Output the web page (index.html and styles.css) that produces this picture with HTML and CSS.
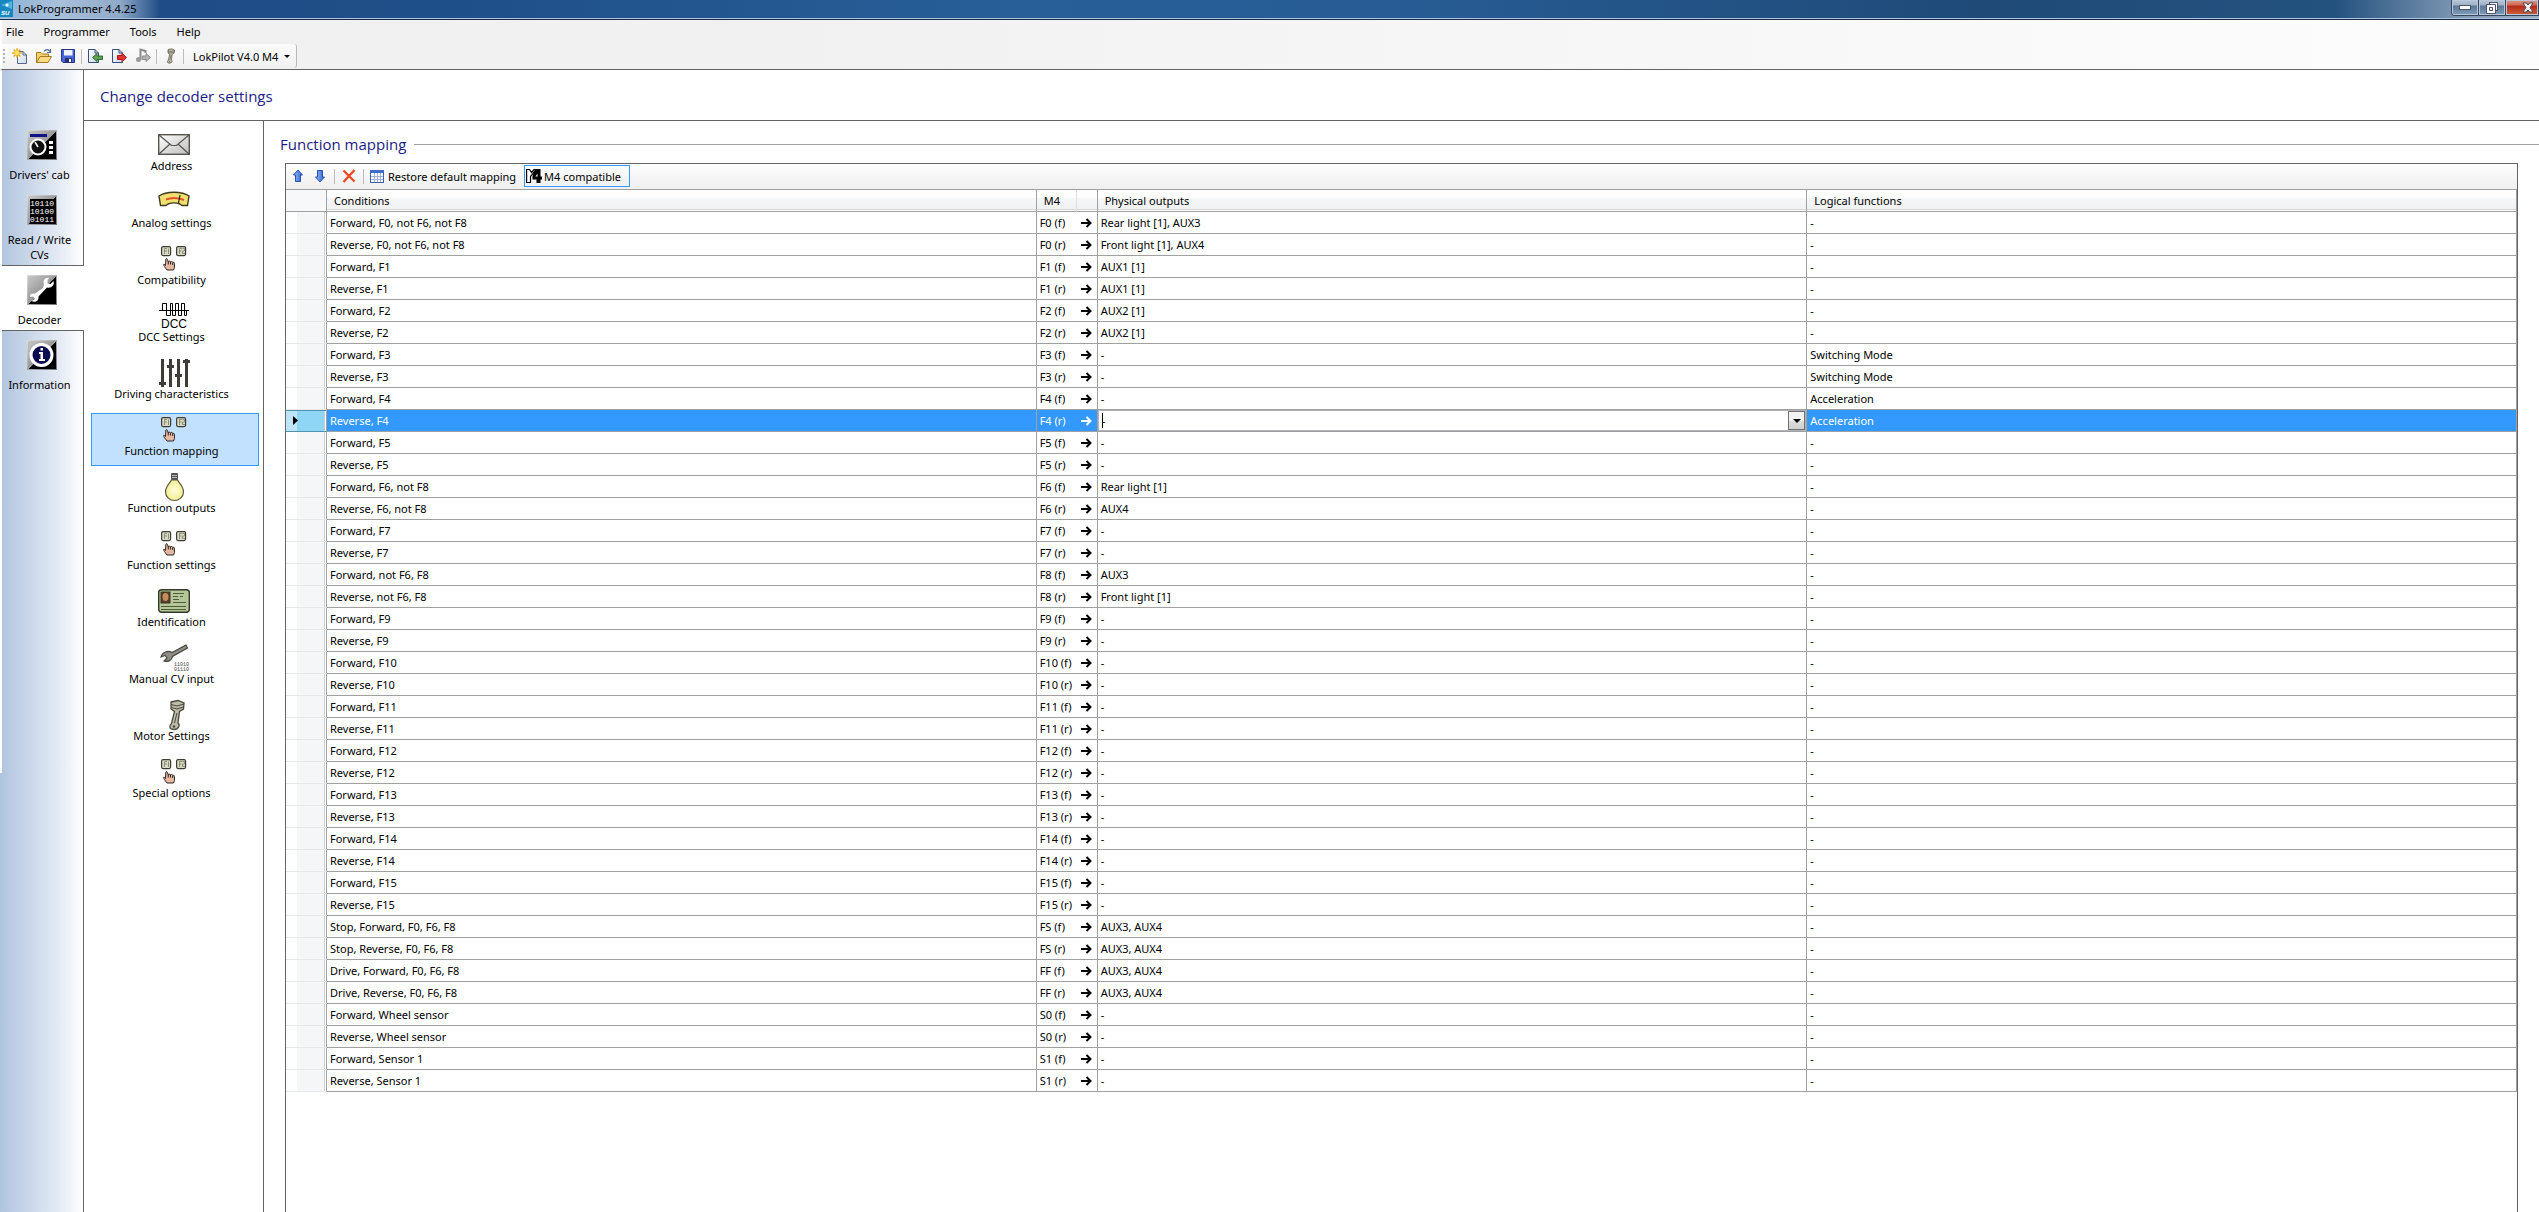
FILE: index.html
```html
<!DOCTYPE html>
<html lang="en">
<head>
<meta charset="utf-8">
<title>LokProgrammer 4.4.25</title>
<link rel="stylesheet" href="styles.css">
</head>
<body>
<svg class="defs" aria-hidden="true">
  <defs>
    <linearGradient id="plate" x1="0" y1="0" x2="1" y2="1">
      <stop offset="0" stop-color="#c8c8c8"/><stop offset=".5" stop-color="#9a9a9a"/><stop offset=".52" stop-color="#000"/><stop offset="1" stop-color="#000"/>
    </linearGradient>
    <linearGradient id="frame" x1="0" y1="0" x2="1" y2="1">
      <stop offset="0" stop-color="#ddd"/><stop offset="1" stop-color="#777"/>
    </linearGradient>
    <linearGradient id="paper" x1="0" y1="0" x2="1" y2="1">
      <stop offset="0" stop-color="#fff"/><stop offset="1" stop-color="#c9d6e8"/>
    </linearGradient>
    <linearGradient id="envelope" x1="0" y1="0" x2="1" y2="1">
      <stop offset="0" stop-color="#fff"/><stop offset="1" stop-color="#bdbdbd"/>
    </linearGradient>
    <linearGradient id="arrow-blue" x1="0" y1="0" x2="1" y2="0">
      <stop offset="0" stop-color="#9dbcf4"/><stop offset="1" stop-color="#2b5fd0"/>
    </linearGradient>
    <radialGradient id="glow"><stop offset="0" stop-color="#fffde0"/><stop offset="1" stop-color="#f3ee90"/></radialGradient>
    <symbol id="fkeys" viewBox="0 0 32 32">
      <g fill="#d9dac6" stroke="#3c3c34" stroke-width="1.200">
        <rect x="3.600" y="3.600" width="9" height="9" rx="1.500"/><rect x="18.600" y="3.600" width="9" height="9" rx="1.500"/>
      </g>
      <g fill="none" stroke="#8d8e78">
        <path d="M6.500 11V5.500H9M6.500 8H9M10.500 5.500V11M21.500 11V5.500H24M21.500 8H23.500M24.500 5.500H26.500V8H24.500V10.500H27"/>
      </g>
      <path d="M7.500 22.500C5.800 20.500 4.800 20.800 6.400 23.500L9 27H15.500L16.500 24.500V20.500C16.500 19 14.700 19 14.700 20.300V19.500C14.500 18 12.500 18 12.500 19.500V19C12.300 17.800 10.300 17.800 10.300 19.200L9.500 16.500C9 15 7.500 15.500 7.800 17Z" fill="#e6b8a2" stroke="#2d2926"/>
      <path d="M10.300 19V21.500M12.500 19V21.500M14.700 20V22" stroke="#2d2926"/>
    </symbol>
    <symbol id="piston" viewBox="0 0 32 32">
      <path d="M13 3L20 1.500L26 4L25.500 10L21.500 12.500L20 24C22.500 26 20.500 30.500 16 30.500C11.500 30.500 10.500 27 13.500 24.500L16.500 12.500L13 10Z" fill="#bdbaa6" stroke="#4a483c" stroke-width="1.300"/>
      <path d="M13 5.500L19 7L26 5M13.500 8.500L19 10L25.500 8M19 14L16.500 24" fill="none" stroke="#4a483c"/>
      <circle cx="16" cy="27.500" r="1.200" fill="#4a483c"/>
    </symbol>
  </defs>
</svg>

<header class="titlebar">
  <svg class="app-logo" viewBox="0 0 13 17"><rect width="13" height="17" fill="#1787c0"/><path d="M1 5L12 1V9Z" fill="#4fb4e0"/><circle cx="7" cy="5" r="1.500" fill="#fff"/><text x="1" y="15" class="logo-text">SU</text></svg>
  <span class="window-title">LokProgrammer 4.4.25</span>
  <div class="window-buttons">
    <button class="win-btn" aria-label="Minimize"><svg width="12" height="6" viewBox="0 0 12 6"><rect x=".5" y=".5" width="11" height="4" fill="#fff" stroke="#4b5468"/></svg></button>
    <button class="win-btn" aria-label="Restore"><svg width="12" height="12" viewBox="0 0 12 12"><g fill="#fff" stroke="#4b5468"><rect x="3.500" y=".5" width="8" height="8"/><path d="M.5 2.500H9.500V11.500H.5ZM3.500 5.500V8.500H6.500V5.500Z" fill-rule="evenodd"/></g></svg></button>
    <button class="win-btn close" aria-label="Close"><svg width="12" height="11" viewBox="0 0 12 11"><path d="M1 1H4.500L6 3L7.500 1H11L8 5.500L11 10H7.500L6 8L4.500 10H1L4 5.500Z" fill="#fff" stroke="#4b4a5c"/></svg></button>
  </div>
</header>

<nav class="menubar">
  <button>File</button><button>Programmer</button><button>Tools</button><button>Help</button>
</nav>

<div class="toolbar-row">
  <div class="toolbar">
    <i class="grip"></i>
    <button aria-label="New"><svg viewBox="0 0 16 16"><path d="M5.500 3.500H11L14.500 7V15.500H5.500Z" fill="url(#paper)" stroke="#53688c"/><path d="M11 3.500V7H14.500" fill="none" stroke="#53688c"/><path d="M5 .2V9.800M.2 5H9.800M1.600 1.600L8.400 8.400M8.400 1.600L1.600 8.400" stroke="#f0a810" stroke-width="1.400"/><circle cx="5" cy="5" r="2" fill="#fff06a"/></svg></button>
    <button aria-label="Open"><svg viewBox="0 0 16 16"><path d="M.5 14.500V4.500H5L6.500 6H12.500V8" fill="#f5d070" stroke="#a97b1c"/><path d="M.5 14.500L4 8.500H15.500L12 14.500Z" fill="#fbdc84" stroke="#a97b1c"/><path d="M8 3.500C10 .8 12.500 1 13.800 3.500M14.500 1V4.500H11" fill="none" stroke="#49699a" stroke-width="1.200"/></svg></button>
    <button aria-label="Save"><svg viewBox="0 0 16 16"><path d="M1.500 1.500H14.500V14.500H3L1.500 13Z" fill="#4664d8" stroke="#23348e"/><path d="M4 2H12.500V7.500H4Z" fill="#eef2fc"/><path d="M5 10H12V14H5Z" fill="#26326c"/><path d="M9 11H11V14H9Z" fill="#fff"/></svg></button>
    <i class="sep"></i>
    <button aria-label="Import"><svg viewBox="0 0 16 16"><path d="M1.500 1.500H8L11.500 5V14.500H1.500Z" fill="url(#paper)" stroke="#35507c"/><path d="M8 1.500V5H11.500" fill="none" stroke="#35507c"/><path d="M5.500 9.500L10 5.500V8H15.500V11.500H10V13.500Z" fill="#5da353" stroke="#2f6d2c"/></svg></button>
    <button aria-label="Export"><svg viewBox="0 0 16 16"><path d="M1.500 1.500H8L11.500 5V14.500H1.500Z" fill="url(#paper)" stroke="#35507c"/><path d="M8 1.500V5H11.500" fill="none" stroke="#35507c"/><path d="M15.500 9.500L11 5V7.500H6.500V11.500H11V14Z" fill="#e33434" stroke="#b01818"/></svg></button>
    <button aria-label="Sound"><svg viewBox="0 0 16 16"><path d="M5.500 12V1.500L10.500 3V5" fill="none" stroke="#8a8a8a" stroke-width="2"/><circle cx="3.500" cy="11.500" r="2.500" fill="#999"/><path d="M15.500 9.500L11 5.500V8H7.500V11.500H11V13.500Z" fill="#b4b4b4" stroke="#8a8a8a"/></svg></button>
    <i class="sep"></i>
    <button aria-label="Motor"><svg viewBox="4 0 26 32"><use href="#piston" width="32" height="32"/></svg></button>
    <i class="sep"></i>
    <button class="decoder-pick">LokPilot V4.0 M4<i class="caret"></i></button>
  </div>
</div>

<div class="workspace">
  <nav class="sidebar">
    <a href="#cab"><svg viewBox="0 0 30 30"><rect x=".5" y=".5" width="29" height="29" fill="url(#plate)" stroke="url(#frame)"/><rect x="3" y="4" width="17" height="3" fill="#11118a"/><circle cx="11" cy="17" r="7.500" fill="#111" stroke="#fff" stroke-width="2"/><path d="M11 17L8 12" stroke="#fff" stroke-width="1.500"/><path d="M22 11H26V14H22ZM22 16H26V19H22ZM22 21H26V24H22Z" fill="#fff"/></svg><span>Drivers' cab</span></a>
    <a href="#cvs"><svg viewBox="0 0 30 30"><rect x=".5" y=".5" width="29" height="29" fill="url(#plate)" stroke="url(#frame)"/><path d="M3 4H27V28H3Z" fill="#000"/><g class="bits"><text x="3" y="11">10110</text><text x="3" y="19">10100</text><text x="3" y="27">01011</text></g></svg><span>Read / Write CVs</span></a>
    <a href="#decoder" class="current"><svg viewBox="0 0 30 30"><rect x=".5" y=".5" width="29" height="29" fill="url(#plate)" stroke="url(#frame)"/><path d="M22 3C18 2 15.500 6 17 9.500L16 13L8 18.500C4 18 2.500 20 3 22L6.500 21.500L7.500 24L4.500 26C8 28 12 26 11.500 21.500L20 12.500C24 13.500 28 10.500 26.500 6L23.500 9L20.500 8.500L20.500 5.500Z" fill="#fff"/></svg><span>Decoder</span></a>
    <a href="#info"><svg viewBox="0 0 30 30"><rect x=".5" y=".5" width="29" height="29" fill="url(#plate)" stroke="url(#frame)"/><circle cx="14.500" cy="15" r="10.500" fill="#0c0c50" stroke="#fff" stroke-width="3"/><path d="M12 12H16V19H18V21H12V19H13.500V14H12ZM13.500 8H16V10.500H13.500Z" fill="#fff"/></svg><span>Information</span></a>
  </nav>

  <div class="content">
    <h1 class="page-title">Change decoder settings</h1>
    <div class="columns">
      <nav class="settings-nav">
        <a href="#address"><svg viewBox="0 0 32 32"><rect x=".7" y="5.700" width="30.600" height="19.600" fill="url(#envelope)" stroke="#55534d" stroke-width="1.400"/><path d="M1 6L13.500 16.500H18.500L31 6M1 25L12 15M31 25L20 15" fill="none" stroke="#55534d" stroke-width="1.200"/></svg><span>Address</span></a>
        <a href="#analog"><svg viewBox="0 0 32 32"><path d="M1 10C8 5 24 5 31 10L29.500 19.500H24L22 18C18 16.500 14 16.500 10 18L8 19.500H2.500Z" fill="#f0e070" stroke="#3f3a20" stroke-width="1.400"/><path d="M8 13.500C13 11.500 20 11.500 26 14" fill="none" stroke="#e8502c" stroke-width="2"/><path d="M22 9L20.500 17" stroke="#302a18" stroke-width="1.300"/></svg><span>Analog settings</span></a>
        <a href="#compat"><svg viewBox="0 0 32 32"><use href="#fkeys"/></svg><span>Compatibility</span></a>
        <a href="#dcc"><svg viewBox="0 0 32 32"><path d="M1 10.500H31M4.500 10V3.500H8.500V15.500H12.500V3.500H14.500V15.500H17.500V3.500H20.500V15.500H23.500V3.500H26.500V15.500H28.500V10" fill="none" stroke="#000"/><text x="3" y="28" class="dcc">DCC</text></svg><span>DCC Settings</span></a>
        <a href="#driving"><svg viewBox="0 0 32 32"><path d="M4.500 2V30M12.500 2V30M20.500 2V30M28.500 2V30" stroke="#3d3c37" stroke-width="3"/><path d="M1 26.500H8M9 9.500H16M17 18.500H24M25 4.500H32" stroke="#3d3c37" stroke-width="3"/></svg><span>Driving characteristics</span></a>
        <a href="#mapping" class="selected"><svg viewBox="0 0 32 32"><use href="#fkeys"/></svg><span>Function mapping</span></a>
        <a href="#outputs"><svg viewBox="0 0 32 32"><path d="M13.500 9C12 12 7.500 15 7.500 21C7.500 26 12 29.500 16.500 29.500C21 29.500 25.500 26 25.500 21C25.500 15 21 12 19.500 9Z" fill="url(#glow)" stroke="#5a5840" stroke-width="1.200"/><rect x="13" y="2" width="7" height="7" rx="1" fill="#555"/><path d="M14 4.500H19M14 6.500H19" stroke="#bbb"/></svg><span>Function outputs</span></a>
        <a href="#settings"><svg viewBox="0 0 32 32"><use href="#fkeys"/></svg><span>Function settings</span></a>
        <a href="#ident"><svg viewBox="0 0 32 32"><rect x=".7" y="4.700" width="30.600" height="22.600" rx="3" fill="#b5c796" stroke="#33382a" stroke-width="1.400"/><rect x="3" y="7" width="9" height="11" fill="#5c3d24" stroke="#33382a"/><ellipse cx="7.500" cy="12" rx="3" ry="4" fill="#c48c5c"/><path d="M15 8.500H26M15 11.500H20M22 11.500H25M15 14.500H21M15 17.500H28M3 21.500H28M3 24.500H28" stroke="#4e5a3c"/></svg><span>Identification</span></a>
        <a href="#manual"><svg viewBox="0 0 32 32"><path d="M28 3L14 10.500C10 8 4 10 3 15L7 13.500L9 16L6 19C10 20.500 14 18 14.500 14.500L29.500 6Z" fill="#8e8c84" stroke="#4a4843" stroke-width="1.200"/><g class="tiny-bits"><text x="16" y="24">11010</text><text x="16" y="29">01110</text></g></svg><span>Manual CV input</span></a>
        <a href="#motor"><svg viewBox="0 0 32 32"><use href="#piston"/></svg><span>Motor Settings</span></a>
        <a href="#special"><svg viewBox="0 0 32 32"><use href="#fkeys"/></svg><span>Special options</span></a>
      </nav>

      <main class="main">
        <h2 class="group-title">Function mapping</h2>
        <section class="panel">
          <div class="panel-toolbar">
            <button aria-label="Move up"><svg viewBox="0 0 16 16"><path d="M8 2L12.500 7H10.500V13.500H5.500V7H3.500Z" fill="url(#arrow-blue)" stroke="#2450b8"/></svg></button>
            <button aria-label="Move down"><svg viewBox="0 0 16 16"><path d="M8 14L12.500 9H10.500V2.500H5.500V9H3.500Z" fill="url(#arrow-blue)" stroke="#2450b8"/></svg></button>
            <i class="sep"></i>
            <button aria-label="Delete"><svg viewBox="0 0 16 16"><path d="M2.500 2.500L13.500 13.500M13.500 2L2.500 14" fill="none" stroke="#ee4a26" stroke-width="2.400"/></svg></button>
            <i class="sep"></i>
            <button class="restore"><svg viewBox="0 0 16 16"><rect x="1.500" y="2.500" width="13" height="12" fill="#fff" stroke="#3f61ac"/><path d="M1 2H15V5H1Z" fill="#3f6ccc"/><path d="M2 8.500H14M2 11.500H14M5.500 5V14M8.500 5V14M11.500 5V14" stroke="#9db2d6"/></svg>Restore default mapping</button>
            <button class="checked" aria-pressed="true"><svg viewBox="0 0 16 16"><path d="M9 1H14.500V8.500H16V11.500H14.500V15H10.500V11.500H6.500V8Z" fill="#000"/><path d="M.6 14.500V1.500H3.500L5.500 4.500L8 1.500H10L4.500 8.500V14.500Z" fill="#fff" stroke="#000" stroke-width="1.200"/><path d="M9.500 8.500L11.500 5.500V8.500Z" fill="#fff"/></svg>M4 compatible</button>
          </div>
          <table class="grid">
            <colgroup><col class="c-head"><col><col class="c-m4"><col class="c-arrow"><col><col></colgroup>
            <thead><tr><th></th><th>Conditions</th><th class="m4">M4</th><th></th><th>Physical outputs</th><th>Logical functions</th></tr></thead>
            <tbody id="rows"></tbody>
          </table>
        </section>
      </main>
    </div>
  </div>
</div>
<script src="rows.js"></script>
</body>
</html>
```
FILE: styles.css
```css
* { box-sizing: border-box; }
body {
  margin: 0;
  min-height: 100vh;
  display: flex;
  flex-direction: column;
  background: #fff;
  color: #000;
  font: 11px/15px "Noto Sans", "Open Sans", sans-serif;
}
button {
  border: 1px solid transparent;
  background: none;
  padding: 0;
  margin: 0;
  font: inherit;
  color: inherit;
  display: flex;
  align-items: center;
}
a { color: inherit; text-decoration: none; }
.defs { position: absolute; width: 0; height: 0; }

/* title bar */
.titlebar {
  height: 20px;
  display: flex;
  align-items: flex-start;
  background: linear-gradient(90deg, #8fb4d8 0, #a9c0da 60px, #8fa9c9 120px, #1f4c86 160px, #1f4f88 18%, #285f98 40%, #275c94 55%, #1f4a78 78%, #24527f 92%, #8199b4 97%, #9cb0c4 100%);
  border-bottom: 1px solid #1c2a4a;
  box-shadow: inset 0 -1px #a9c4de;
}
.app-logo { width: 13px; height: 17px; }
.logo-text { font: italic bold 6px "Liberation Sans", sans-serif; fill: #fff; }
.window-title { flex: 1; padding-left: 5px; line-height: 18px; }
.window-buttons { display: flex; border: 1px solid #33475f; border-top: 0; border-bottom-left-radius: 4px; overflow: hidden; }
.win-btn {
  width: 27px;
  height: 15px;
  justify-content: center;
  border: 0;
  border-right: 1px solid #33475f;
  background: linear-gradient(#b9c7d8 0, #9fb2c8 5px, #5c7797 6px, #7f9cb8 15px);
  box-shadow: inset 0 0 0 1px #b8c8d8;
}
.win-btn.close { width: 32px; padding-left: 12px; border-right: 0; background: linear-gradient(#dc9a88 0, #cf6a52 5px, #b4291a 6px, #cf6236 15px); }

/* menus and main toolbar */
.menubar, .toolbar-row { background: linear-gradient(90deg, #f0f0f0, #f1f1f1 30%, #fdfdfd); border-left: 2px solid #fff; }
.menubar { display: flex; height: 24px; align-items: center; padding: 0 0 2px 3px; gap: 18px; }
.toolbar-row { border-bottom: 1px solid #646464; height: 26px; }
.toolbar {
  display: inline-flex;
  align-items: center;
  height: 24px;
  padding-right: 5px;
  background: linear-gradient(#fcfcfc, #f1f1f1);
  border-right: 1px solid #b8b8b8;
  border-radius: 0 3px 3px 0;
}
.toolbar svg { width: 16px; height: 16px; margin: 0 3px; }
.grip { width: 2px; height: 15px; margin: 0 3px 0 1px; background: repeating-linear-gradient(#b4b4b4 0 2px, transparent 2px 4px); }
.sep { width: 1px; height: 15px; background: #bdbdbd; }
.toolbar .sep { margin: 0 1px; }
.decoder-pick { padding-left: 7px; gap: 6px; }
.caret { border: 3px solid transparent; border-top-color: #000; border-bottom: 0; }

/* left bar */
.workspace { flex: 1; display: flex; }
.sidebar {
  width: 84px;
  padding-top: 50px;
  display: flex;
  flex-direction: column;
  background:
    linear-gradient(#fff, #fff) 0 0 / 2px 703px no-repeat,
    linear-gradient(90deg, #b0c4de, #e4eaf5 70%, #fff);
}
.sidebar a {
  display: flex;
  flex-direction: column;
  align-items: center;
  gap: 7px;
  min-height: 65px;
  margin-left: 2px;
  padding: 10px 6px 3px 3px;
  text-align: center;
}
.sidebar svg { width: 30px; height: 30px; }
.sidebar span { max-width: 72px; padding-right: 4px; }
.sidebar .current { z-index: 1; background: #fff; border: solid #646464; border-width: 1px 0; height: 66px; padding-top: 9px; margin-bottom: -1px; }
.bits { font: 8px "Liberation Mono", monospace; fill: #fff; }
.tiny-bits { font: 5px "Liberation Mono", monospace; fill: #444; }
.dcc { font: 12px "Liberation Sans", sans-serif; }

/* content */
.content { flex: 1; min-width: 0; display: flex; flex-direction: column; border-left: 1px solid #646464; margin-left: -1px; }
.page-title, .group-title { margin: 0; font: 15px/20px "Open Sans", sans-serif; color: #1c1c84; }
.page-title { padding: 16px 16px 14px; border-bottom: 1px solid #646464; height: 51px; }
.columns { flex: 1; display: flex; }
.settings-nav { width: 180px; padding: 7px 4px 0 7px; border-right: 1px solid #646464; display: flex; flex-direction: column; gap: 4px; }
.settings-nav a { display: flex; flex-direction: column; align-items: center; height: 53px; padding-right: 2px; border: 1px solid transparent; }
.settings-nav svg { width: 32px; height: 32px; }
.settings-nav span { padding-right: 5px; margin-top: -3px; }
.settings-nav .selected { background: #c2e0ff; border-color: #3399ff; }

/* main panel */
.main { flex: 1; min-width: 0; display: flex; flex-direction: column; padding: 13px 0 0 16px; }
.group-title { display: flex; align-items: center; gap: 8px; }
.group-title::after { content: ""; flex: 1; height: 1px; background: #a0a0a0; }
.panel { flex: 1; margin: 9px 21px 0 5px; border: 1px solid #646464; border-bottom: 0; }
.panel-toolbar { display: flex; align-items: center; height: 25px; padding: 0 0 1px 1px; background: linear-gradient(#fdfdfd, #efefef); }
.panel-toolbar button { height: 22px; padding: 0 2px; gap: 2px; }
.panel-toolbar svg { width: 16px; height: 16px; }
.panel-toolbar .sep { margin: 0 3px; }
.panel-toolbar .restore { gap: 3px; padding-left: 1px; }
.panel-toolbar .checked { border-color: #3399ff; margin-left: 5px; padding: 0 8px 0 1px; }

.grid { width: 100%; table-layout: fixed; border-spacing: 0; border-top: 1px solid #a0a0a0; }
.c-head { width: 41px; }
.c-m4 { width: 40px; }
.c-arrow { width: 21px; }
.grid th, .grid td { height: 22px; padding: 0 0 0 3px; border: solid #a0a0a0; border-width: 0 1px 1px 0; line-height: 15px; text-align: left; font-weight: normal; white-space: nowrap; }
.grid th { padding-left: 7px; background: linear-gradient(#fff 0 8px, #f5f6f8 8px, #f1f2f4 19px, #d5d5d5 19px 20px, #fff 20px); }
.grid th:first-child { background: #f7f8fa; }
.grid th.m4 { border-right-color: #e0e0e0; }
.grid td:first-child { padding-left: 7px; border-bottom-color: #e8e8e8; background: linear-gradient(90deg, #fff 0 11px, #f5f6f8 11px 38px, #d0d0d0 38px 39px, #fff 39px); }
.grid td.m4 { border-right: 0; }
.grid td.arrow { padding-left: 4px; }
.grid td svg { display: block; }
.grid .active td { background: #3399ff; color: #fff; }
.grid .active td:first-child { background: linear-gradient(90deg, #bfe4f8 0 11px, #8fd5f6 11px 38px, #d0d0d0 38px 39px, #fff 39px); box-shadow: inset 0 1px #4f93b0; border-bottom-color: #4f93b0; color: #000; }
.grid .active td.edit { padding: 0; background: #fff; color: #000; }
.editor { display: flex; height: 21px; border: 1px solid #b0b0b8; }
.editor input { flex: 1; min-width: 0; border: 0; padding: 0 0 0 3px; font: inherit; background: linear-gradient(#000, #000) 3px 2px / 1px 15px no-repeat; outline: 0; }
.editor button { width: 17px; justify-content: center; border: 1px solid #707070; background: linear-gradient(#f2f2f2 0 50%, #dcdcdc 50%, #d0d0d0); }
.editor .caret { border-width: 4px 4px 0; }
```
FILE: rows.js
```js
const pair = (cond, m4, physical = ['-', '-'], logical = '-') => [
  [cond.replace('*', 'Forward'), `${m4} (f)`, physical[0], logical],
  [cond.replace('*', 'Reverse'), `${m4} (r)`, physical[1], logical],
];
const rows = [
  ...pair('*, F0, not F6, not F8', 'F0', ['Rear light [1], AUX3', 'Front light [1], AUX4']),
  ...pair('*, F1', 'F1', ['AUX1 [1]', 'AUX1 [1]']),
  ...pair('*, F2', 'F2', ['AUX2 [1]', 'AUX2 [1]']),
  ...pair('*, F3', 'F3', undefined, 'Switching Mode'),
  ...pair('*, F4', 'F4', undefined, 'Acceleration'),
  ...pair('*, F5', 'F5'),
  ...pair('*, F6, not F8', 'F6', ['Rear light [1]', 'AUX4']),
  ...pair('*, F7', 'F7'),
  ...pair('*, not F6, F8', 'F8', ['AUX3', 'Front light [1]']),
  ...[9, 10, 11, 12, 13, 14, 15].flatMap(n => pair(`*, F${n}`, `F${n}`)),
  ...pair('Stop, *, F0, F6, F8', 'FS', ['AUX3, AUX4', 'AUX3, AUX4']),
  ...pair('Drive, *, F0, F6, F8', 'FF', ['AUX3, AUX4', 'AUX3, AUX4']),
  ...pair('*, Wheel sensor', 'S0'),
  ...pair('*, Sensor 1', 'S1'),
];
const arrow = '<svg width="12" height="10" viewBox="0 0 12 10"><path d="M0 5H10M5.500 1L9.500 5L5.500 9" fill="none" stroke="currentColor" stroke-width="2"/></svg>';
const marker = '<svg width="5" height="9" viewBox="0 0 5 9"><path d="M0 0L5 4.500L0 9Z"/></svg>';
const editor = '<div class="editor"><input type="text" value="-" aria-label="Physical outputs"><button aria-label="Open list"><i class="caret"></i></button></div>';
document.getElementById('rows').innerHTML = rows.map(([cond, m4, physical, logical]) => {
  const active = cond === 'Reverse, F4';
  return `<tr${active ? ' class="active"' : ''}><td>${active ? marker : ''}</td><td>${cond}</td><td class="m4">${m4}</td><td class="arrow">${arrow}</td><td${active ? ' class="edit"' : ''}>${active ? editor : physical}</td><td>${logical}</td></tr>`;
}).join('');
```
